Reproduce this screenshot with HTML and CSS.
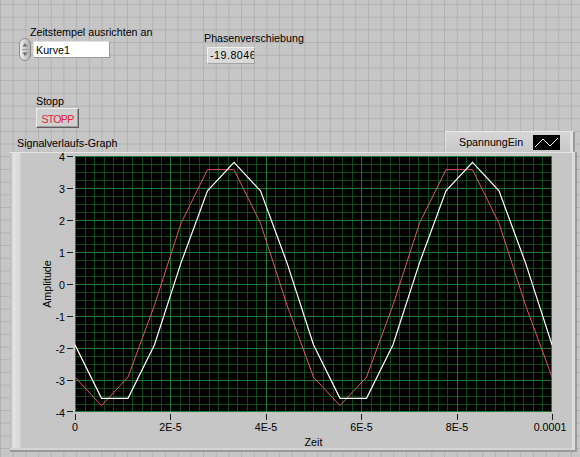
FILE: index.html
```html
<!DOCTYPE html>
<html lang="de">
<head>
    <meta charset="UTF-8">
    <meta name="viewport" content="width=device-width, initial-scale=1.0">
    <title>Frontpanel - Signalverlauf</title>
    <link rel="stylesheet" href="styles.css">
</head>
<body>
    <div class="panel">
        <div class="row-top">
            <div class="ring-ctl">
                <div class="label ring-label">Zeitstempel ausrichten an</div>
                <div class="ring-row">
                    <svg class="spinner" width="12" height="23" viewBox="0 0 12 23">
                        <defs>
                            <linearGradient id="spinGrad" x1="0" x2="1" y1="0" y2="0">
                                <stop offset="0" stop-color="#f2f2f2"/>
                                <stop offset="1" stop-color="#a9a9a9"/>
                            </linearGradient>
                        </defs>
                        <rect x="0.5" y="0.5" width="11" height="22" rx="5.5" fill="url(#spinGrad)" stroke="#8c8c8c"/>
                        <path d="M6 5L8.5 8.5H3.5Z" fill="#6c6c6c"/>
                        <line x1="3" y1="11.5" x2="9" y2="11.5" stroke="#989898"/>
                        <path d="M6 18L8.5 14.5H3.5Z" fill="#6c6c6c"/>
                    </svg>
                    <div class="ring-box">Kurve1</div>
                </div>
            </div>
            <div class="num-ind">
                <div class="label">Phasenverschiebung</div>
                <div class="num-box">-19.8046</div>
            </div>
        </div>

        <div class="row-stop">
            <div class="label">Stopp</div>
            <button class="stop-btn">STOPP</button>
        </div>

        <div class="row-graph-head">
            <div class="label graph-label">Signalverlaufs-Graph</div>
            <div class="legend">
                <span class="legend-name">SpannungEin</span>
                <svg class="legend-swatch" width="27" height="15" viewBox="0 0 27 15">
                    <rect width="27" height="15" fill="#000"/>
                    <polyline points="2,12 10,4 17,11 25,3" fill="none" stroke="#fff" stroke-width="1"/>
                </svg>
            </div>
        </div>

        <div class="graph">
            <svg class="graph-svg" width="565" height="298" viewBox="0 0 565 298">
                <defs>
                    <clipPath id="plotClip"><rect width="477" height="256"/></clipPath>
                </defs>
                <g transform="translate(65,4)">
                    <rect width="477" height="256" fill="#000"/>
                    <!-- minor grid -->
                    <path class="grid-minor" d="M0 8.5H477M0 16.5H477M0 24.5H477M0 40.5H477M0 48.5H477M0 56.5H477M0 72.5H477M0 80.5H477M0 88.5H477M0 104.5H477M0 112.5H477M0 120.5H477M0 136.5H477M0 144.5H477M0 152.5H477M0 168.5H477M0 176.5H477M0 184.5H477M0 200.5H477M0 208.5H477M0 216.5H477M0 232.5H477M0 240.5H477M0 248.5H477"/>
                    <path class="grid-minor" d="M10.5 0V256M19.5 0V256M29.5 0V256M38.5 0V256M48.5 0V256M57.5 0V256M67.5 0V256M76.5 0V256M86.5 0V256M105.5 0V256M114.5 0V256M124.5 0V256M134.5 0V256M143.5 0V256M153.5 0V256M162.5 0V256M172.5 0V256M181.5 0V256M200.5 0V256M210.5 0V256M219.5 0V256M229.5 0V256M238.5 0V256M248.5 0V256M258.5 0V256M267.5 0V256M277.5 0V256M296.5 0V256M305.5 0V256M315.5 0V256M324.5 0V256M334.5 0V256M343.5 0V256M353.5 0V256M363.5 0V256M372.5 0V256M391.5 0V256M401.5 0V256M410.5 0V256M420.5 0V256M429.5 0V256M439.5 0V256M448.5 0V256M458.5 0V256M467.5 0V256"/>
                    <!-- major grid -->
                    <path class="grid-major" d="M0 0.5H477M0 32.5H477M0 64.5H477M0 96.5H477M0 128.5H477M0 160.5H477M0 192.5H477M0 224.5H477M0 255.5H477"/>
                    <path class="grid-major" d="M0.5 0V256M95.5 0V256M191.5 0V256M286.5 0V256M382.5 0V256M476.5 0V256"/>
                    <g clip-path="url(#plotClip)">
                        <polyline class="curve-red" points="0,221.1 26.5,249.6 53,221.1 79.5,149.1 106,67.2 132.5,13.7 159,13.7 185.5,67.2 212,149.1 238.5,221.1 265,249.6 291.5,221.1 318,149.1 344.5,67.2 371,13.7 397.5,13.7 424,67.2 450.5,149.1 477,221.1"/>
                        <polyline class="curve-white" points="0,188.8 26.5,242.3 53,242.3 79.5,188.8 106,106.9 132.5,34.9 159,6.4 185.5,34.9 212,106.9 238.5,188.8 265,242.3 291.5,242.3 318,188.8 344.5,106.9 371,34.9 397.5,6.4 424,34.9 450.5,106.9 477,188.8"/>
                    </g>
                </g>

                <!-- y axis -->
                <path class="tick" d="M57 4.5H63M57 36.5H63M57 68.5H63M57 100.5H63M57 132.5H63M57 164.5H63M57 196.5H63M57 228.5H63M57 259.5H63"/>
                <g class="axis-text y-labels">
                    <text x="55" y="8.8">4</text>
                    <text x="55" y="40.8">3</text>
                    <text x="55" y="72.8">2</text>
                    <text x="55" y="104.8">1</text>
                    <text x="55" y="136.8">0</text>
                    <text x="55" y="168.8">-1</text>
                    <text x="55" y="200.8">-2</text>
                    <text x="55" y="232.8">-3</text>
                    <text x="55" y="264.8">-4</text>
                </g>
                <text class="axis-text" transform="translate(40.5,132) rotate(-90)" text-anchor="middle">Amplitude</text>

                <!-- x axis -->
                <path class="tick" d="M65.5 262V268M160.5 262V268M256.5 262V268M351.5 262V268M447.5 262V268M542.5 262V268"/>
                <g class="axis-text x-labels">
                    <text x="65" y="279">0</text>
                    <text x="160.5" y="279">2E-5</text>
                    <text x="256" y="279">4E-5</text>
                    <text x="351.5" y="279">6E-5</text>
                    <text x="447" y="279">8E-5</text>
                    <text x="540" y="279">0.0001</text>
                </g>
                <text class="axis-text" x="303.5" y="294" text-anchor="middle">Zeit</text>
            </svg>
        </div>
    </div>
</body>
</html>
```

FILE: styles.css
```css
body {
    margin: 0;
    font-family: "Liberation Sans", Arial, sans-serif;
    font-size: 10.7px;
    color: #000;
}
.panel {
    width: 580px;
    height: 457px;
    overflow: hidden;
    background-color: #c6c6c6;
    background-image:
        linear-gradient(to right, #b2b2b2 1px, transparent 1px),
        linear-gradient(to bottom, #b2b2b2 1px, transparent 1px);
    background-size: 12.7px 12.7px;
    background-position: 0 4px;
}
.label {
    line-height: 13px;
    white-space: nowrap;
}

/* top row: ring control + numeric indicator */
.row-top {
    display: flex;
    height: 64px;
    box-sizing: border-box;
    padding-top: 26px;
}
.ring-ctl {
    width: 204px;
    padding-left: 19px;
    box-sizing: border-box;
}
.ring-label {
    margin-left: 11px;
}
.ring-row {
    display: flex;
    align-items: center;
    margin-top: -1.5px;
}
.spinner {
    display: block;
}
.ring-box {
    margin-left: 2px;
    width: 77px;
    height: 17px;
    box-sizing: border-box;
    padding: 1px 0 0 2px;
    line-height: 15px;
    background: #fff;
    border: 1px solid;
    border-color: #e2e2e2 #999 #999 #e2e2e2;
}
.num-ind {
    margin-top: 5.5px;
}
.num-box {
    margin: 2.5px 0 0 3px;
    width: 48px;
    height: 17px;
    box-sizing: border-box;
    padding-left: 2px;
    line-height: 15px;
    letter-spacing: 0.5px;
    white-space: nowrap;
    overflow: hidden;
    background: #dadada;
    border: 1px solid;
    border-color: #efefef #a4a4a4 #a4a4a4 #efefef;
}

/* stop button */
.row-stop {
    height: 67px;
    box-sizing: border-box;
    padding: 31px 0 0 36px;
}
.stop-btn {
    display: block;
    width: 43px;
    height: 20px;
    box-sizing: border-box;
    margin: 0;
    padding: 1px 0 0 0;
    font-family: inherit;
    font-size: 10.7px;
    letter-spacing: -0.8px;
    color: #e4203c;
    background: #cfcfcf;
    border: 1px solid;
    border-color: #ececec #5e5e5e #5e5e5e #ececec;
    box-shadow: inset -1px -1px 0 #9a9a9a;
}

/* graph header: label + plot legend */
.row-graph-head {
    display: flex;
    height: 21px;
}
.graph-label {
    margin: 5.5px 0 0 17px;
}
.legend {
    margin-left: auto;
    margin-right: 5px;
    width: 130px;
    height: 21px;
    box-sizing: border-box;
    display: flex;
    align-items: center;
    padding: 0 13px 0 13px;
    background: linear-gradient(#d6d6d6, #c8c8c8);
    border-top: 1px solid #e8e8e8;
    border-left: 1px solid #dedede;
    border-right: 2px solid #9a9a9a;
    box-shadow: inset -3px 0 0 #e0e0e0;
}
.legend-swatch {
    display: block;
    margin-left: auto;
}

/* waveform graph */
.graph {
    margin-left: 10px;
    width: 567px;
    height: 300px;
    box-sizing: border-box;
    border-right: 2px solid #999;
    border-bottom: 2px solid #999;
    background: linear-gradient(to right, #bebebe 0, #bebebe 1px, #e2e2e2 3px, #dadada 9px, #c6c6c6 12px, #c6c6c6 100%);
    box-shadow: inset 0 1px 0 #e6e6e6, inset -3px 0 0 #dcdcdc, inset 0 -2px 0 #d4d4d4;
}
.graph-svg {
    display: block;
}
.grid-minor {
    stroke: #0d4a19;
    stroke-width: 1;
    fill: none;
}
.grid-major {
    stroke: #1d7a31;
    stroke-width: 1;
    fill: none;
}
.curve-red {
    fill: none;
    stroke: #e05a5a;
    stroke-width: 1;
}
.curve-white {
    fill: none;
    stroke: #fff;
    stroke-width: 1.2;
}
.tick {
    stroke: #1a1a1a;
    stroke-width: 1;
    fill: none;
}
.axis-text {
    font-family: "Liberation Sans", Arial, sans-serif;
    font-size: 10.7px;
    fill: #000;
}
.y-labels {
    text-anchor: end;
}
.x-labels {
    text-anchor: middle;
}
```
